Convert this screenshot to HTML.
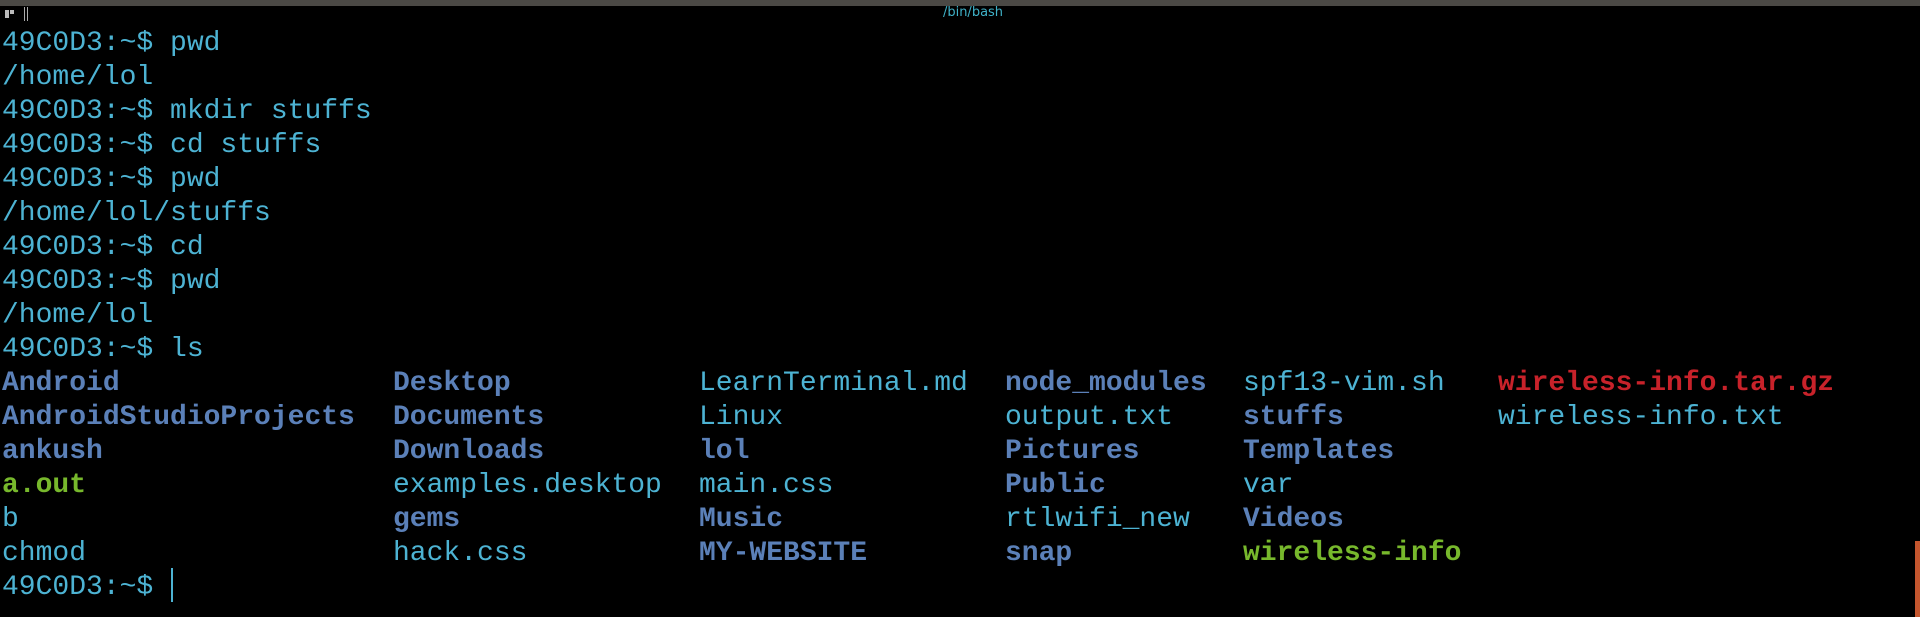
<!DOCTYPE html>
<html><head><meta charset="utf-8"><style>
html,body{margin:0;padding:0;background:#000;width:1920px;height:617px;overflow:hidden}
.top{position:absolute;left:0;top:0;width:1920px;height:6px;background:#4b4945}
.title{position:absolute;top:5px;left:0;width:1946px;text-align:center;font:13px "DejaVu Sans","Liberation Sans",sans-serif;color:#3fb2c8}
.ic{position:absolute;left:5px;top:10px;width:4px;height:4px;background:#bbb;box-shadow:5px 0 0 #bbb,0 4px 0 #bbb}
.bar{position:absolute;left:24px;top:7px;width:2px;height:14px;border-left:1px solid #aaa;border-right:1px solid #aaa}
.term{position:absolute;left:2px;top:27px;font:28px/34px "Liberation Mono","DejaVu Sans Mono",monospace;color:#4db3d3;white-space:normal}
.row{height:34px;position:relative;white-space:pre}
.row span{position:absolute;top:0}
.b{color:#5b80b8;font-weight:bold}
.g{color:#77b82c;font-weight:bold}
.r{color:#c8222a;font-weight:bold}
.c{color:#4db3d3}
.cur{position:absolute;left:171px;top:568px;width:2px;height:34px;background:#4db3d3}
.scroll{position:absolute;left:1915px;top:541px;width:5px;height:76px;background:#c4562e}
</style></head><body>
<div class="top"></div><div class="ic"></div><div class="bar"></div>
<div class="title">/bin/bash</div>
<div class="term"><div class="row">49C0D3:~$ pwd</div><div class="row">/home/lol</div><div class="row">49C0D3:~$ mkdir stuffs</div><div class="row">49C0D3:~$ cd stuffs</div><div class="row">49C0D3:~$ pwd</div><div class="row">/home/lol/stuffs</div><div class="row">49C0D3:~$ cd</div><div class="row">49C0D3:~$ pwd</div><div class="row">/home/lol</div><div class="row">49C0D3:~$ ls</div><div class="row"><span class="b" style="left:0">Android</span><span class="b" style="left:391px">Desktop</span><span class="c" style="left:697px">LearnTerminal.md</span><span class="b" style="left:1003px">node_modules</span><span class="c" style="left:1241px">spf13-vim.sh</span><span class="r" style="left:1496px">wireless-info.tar.gz</span></div><div class="row"><span class="b" style="left:0">AndroidStudioProjects</span><span class="b" style="left:391px">Documents</span><span class="c" style="left:697px">Linux</span><span class="c" style="left:1003px">output.txt</span><span class="b" style="left:1241px">stuffs</span><span class="c" style="left:1496px">wireless-info.txt</span></div><div class="row"><span class="b" style="left:0">ankush</span><span class="b" style="left:391px">Downloads</span><span class="b" style="left:697px">lol</span><span class="b" style="left:1003px">Pictures</span><span class="b" style="left:1241px">Templates</span></div><div class="row"><span class="g" style="left:0">a.out</span><span class="c" style="left:391px">examples.desktop</span><span class="c" style="left:697px">main.css</span><span class="b" style="left:1003px">Public</span><span class="c" style="left:1241px">var</span></div><div class="row"><span class="c" style="left:0">b</span><span class="b" style="left:391px">gems</span><span class="b" style="left:697px">Music</span><span class="c" style="left:1003px">rtlwifi_new</span><span class="b" style="left:1241px">Videos</span></div><div class="row"><span class="c" style="left:0">chmod</span><span class="c" style="left:391px">hack.css</span><span class="b" style="left:697px">MY-WEBSITE</span><span class="b" style="left:1003px">snap</span><span class="g" style="left:1241px">wireless-info</span></div><div class="row">49C0D3:~$ </div></div>
<div class="cur"></div><div class="scroll"></div>
</body></html>
